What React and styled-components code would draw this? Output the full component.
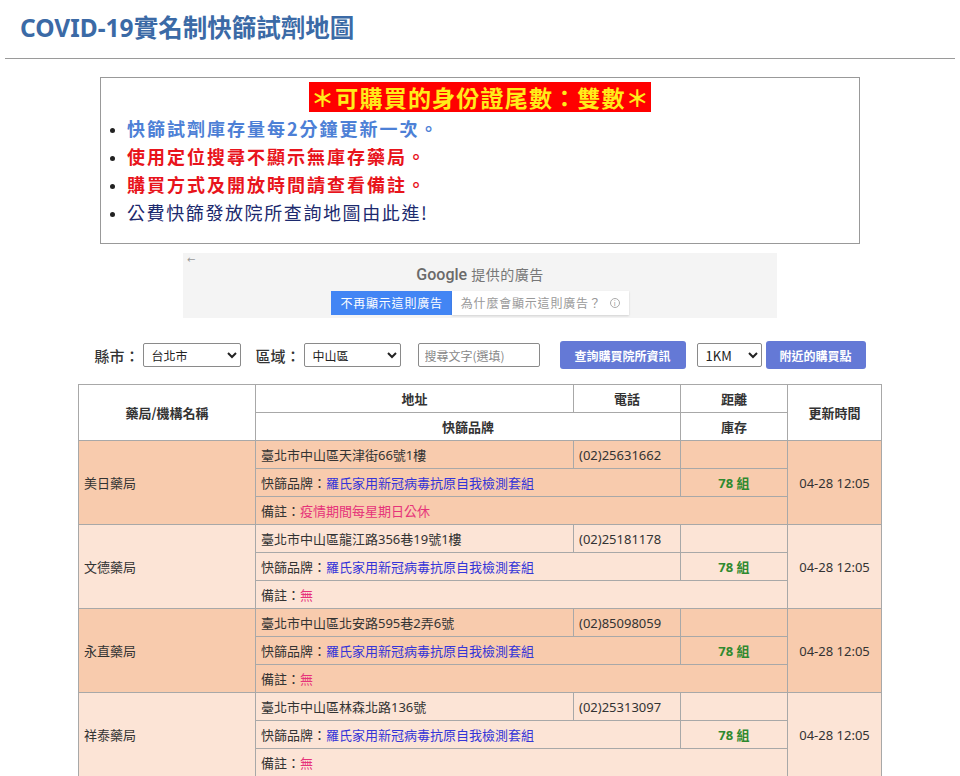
import React from "react";
import styled, { createGlobalStyle } from "styled-components";

const Global = createGlobalStyle`
  html, body { margin: 0; padding: 0; background: #fff; }
  body { font-family: "Noto Sans", "Noto Sans CJK TC", sans-serif; color: #333; }
  * { box-sizing: border-box; }
`;

const Page = styled.div`
  width: 960px;
  display: flex;
  flex-direction: column;
  align-items: center;
`;

const Header = styled.header`
  align-self: stretch;
  padding: 10px 15px 0;
  height: 59px;
  border-bottom: 1px solid #9a9a9a;
  margin: 0 5px;
`;

const Title = styled.h1`
  margin: 0;
  font-size: 24.5px;
  line-height: 36px;
  font-weight: 700;
  color: #3b6aa6;
  font-family: "Noto Sans", "Noto Sans CJK TC", sans-serif;
`;

const Notice = styled.section`
  margin-top: 18px;
  width: 760px;
  height: 167px;
  border: 1px solid #999;
  display: flex;
  flex-direction: column;
  align-items: center;
`;

const Banner = styled.div`
  margin-top: 4px;
  height: 30px;
  line-height: 30px;
  background: #ff0000;
  color: #ffeb1a;
  font-weight: 700;
  font-size: 23px;
  letter-spacing: 1.2px;
  padding: 0 1px 0 2px;
  font-family: "Noto Sans CJK TC", sans-serif;
`;

const Bullets = styled.ul`
  align-self: stretch;
  margin: 2px 0 0;
  padding-left: 26px;
  list-style: disc;
`;

const Bullet = styled.li`
  height: 28px;
  line-height: 28px;
  font-size: 18px;
  letter-spacing: ${(p) => (p.$bold ? 2 : 1.6)}px;
  font-weight: ${(p) => (p.$bold ? 700 : 400)};
  color: ${(p) => p.$color};
  font-family: "Noto Sans CJK TC", sans-serif;
  &::marker { color: #222; font-size: 13px; }
`;

const Ad = styled.div`
  margin-top: 9px;
  width: 594px;
  height: 65px;
  background: #f4f4f4;
  position: relative;
  display: flex;
  flex-direction: column;
  align-items: center;
  padding-top: 11px;
`;

const BackArrow = styled.span`
  position: absolute;
  left: 4px;
  top: 1px;
  font-size: 10px;
  color: #999;
  font-family: "DejaVu Sans", sans-serif;
`;

const AdLabel = styled.div`
  font-size: 14px;
  color: #777;
  line-height: 20px;
  font-family: "Noto Sans CJK TC", sans-serif;
  letter-spacing: 0.5px;
  span { font-family: "Roboto", "Noto Sans", sans-serif; font-size: 16px; font-weight: 500; color: #6a6a6a; letter-spacing: 0; margin-right: 4px; }
`;

const AdButtons = styled.div`
  margin-top: 6px;
  display: flex;
`;

const AdButton = styled.div`
  height: 24px;
  line-height: 24px;
  font-size: 12px;
  padding: 0 9px;
  background: ${(p) => (p.$primary ? "#4285f4" : "#fff")};
  color: ${(p) => (p.$primary ? "#fff" : "#999")};
  box-shadow: ${(p) => (p.$primary ? "none" : "0 1px 2px rgba(0,0,0,0.15)")};
  font-family: "Noto Sans CJK TC", sans-serif;
  letter-spacing: 0.8px;
  display: flex;
  align-items: center;
  gap: 8px;
`;

const InfoIcon = styled.span`
  width: 10px;
  height: 10px;
  border: 1px solid #aaa;
  border-radius: 50%;
  font-size: 7px;
  line-height: 8px;
  text-align: center;
  color: #999;
  letter-spacing: 0;
`;

const Controls = styled.div`
  margin-top: 23px;
  display: flex;
  align-items: center;
  height: 28px;
`;

const Label = styled.span`
  font-size: 15px;
  color: #333;
  margin-right: 3px;
  margin-left: ${(p) => p.$ml || 0}px;
  font-family: "Noto Sans CJK TC", sans-serif;
  font-weight: 500;
`;

const Select = styled.select`
  width: ${(p) => p.$w}px;
  height: 24px;
  font-size: ${(p) => p.$fs || 12}px;
  border: 1px solid #8a8a8a;
  border-radius: 2px;
  background: #fff;
  color: #222;
  padding: 0 4px;
  margin-left: ${(p) => p.$ml || 0}px;
  font-family: "Noto Sans CJK TC", "Noto Sans", sans-serif;
`;

const Input = styled.input`
  width: 122px;
  height: 24px;
  margin-left: 17px;
  border: 1px solid #8a8a8a;
  border-radius: 2px;
  padding: 0 6px;
  font-size: 12px;
  font-family: "Noto Sans CJK TC", sans-serif;
  &::placeholder { color: #888; }
`;

const Button = styled.button`
  width: ${(p) => p.$w}px;
  height: 28px;
  margin-left: ${(p) => p.$ml || 0}px;
  border: none;
  border-radius: 3px;
  background: #6479d6;
  color: #fff;
  font-size: 12px;
  font-weight: 700;
  font-family: "Noto Sans CJK TC", sans-serif;
`;

const Table = styled.table`
  margin-top: 15px;
  width: 803px;
  border-collapse: collapse;
  border: 1px solid #858585;
  table-layout: fixed;
  font-size: 13px;
  font-family: "Noto Sans", "Noto Sans CJK TC", sans-serif;
`;

const Th = styled.th`
  height: 28px;
  border: 1px solid #a8a8a8;
  background: #fff;
  font-weight: 700;
  color: #333;
  padding: 0;
  font-family: "Noto Sans CJK TC", sans-serif;
`;

const Td = styled.td`
  height: 28px;
  border: 1px solid #a8a8a8;
  padding: 0 5px;
  color: #333;
  background: ${(p) => (p.$dark ? "#f8cbad" : "#fce4d6")};
  text-align: ${(p) => p.$align || "left"};
  white-space: nowrap;
`;

const Brand = styled.span`
  color: #3535d8;
`;

const Note = styled.span`
  color: #e6337a;
`;

const Stock = styled.span`
  color: #2f8a2f;
  font-weight: 700;
`;

const rows = [
  { name: "美日藥局", addr: "臺北市中山區天津街66號1樓", phone: "(02)25631662", note: "疫情期間每星期日公休" },
  { name: "文德藥局", addr: "臺北市中山區龍江路356巷19號1樓", phone: "(02)25181178", note: "無" },
  { name: "永直藥局", addr: "臺北市中山區北安路595巷2弄6號", phone: "(02)85098059", note: "無" },
  { name: "祥泰藥局", addr: "臺北市中山區林森北路136號", phone: "(02)25313097", note: "無" },
];

export default function App() {
  return (
    <>
      <Global />
      <Page>
        <Header>
          <Title>COVID-19實名制快篩試劑地圖</Title>
        </Header>
        <Notice>
          <Banner>＊可購買的身份證尾數：雙數＊</Banner>
          <Bullets>
            <Bullet $bold $color="#4d80d6">快篩試劑庫存量每2分鐘更新一次。</Bullet>
            <Bullet $bold $color="#e8141c">使用定位搜尋不顯示無庫存藥局。</Bullet>
            <Bullet $bold $color="#e8141c">購買方式及開放時間請查看備註。</Bullet>
            <Bullet $color="#1c2a6e">公費快篩發放院所查詢地圖由此進!</Bullet>
          </Bullets>
        </Notice>
        <Ad>
          <BackArrow>←</BackArrow>
          <AdLabel><span>Google</span>提供的廣告</AdLabel>
          <AdButtons>
            <AdButton $primary>不再顯示這則廣告</AdButton>
            <AdButton>為什麼會顯示這則廣告？<InfoIcon>i</InfoIcon></AdButton>
          </AdButtons>
        </Ad>
        <Controls>
          <Label>縣市：</Label>
          <Select $w={98} defaultValue="台北市"><option>台北市</option></Select>
          <Label $ml={15}>區域：</Label>
          <Select $w={97} defaultValue="中山區"><option>中山區</option></Select>
          <Input placeholder="搜尋文字(選填)" />
          <Button $w={126} $ml={20}>查詢購買院所資訊</Button>
          <Select $w={65} $ml={11} $fs={13} defaultValue="1KM"><option>1KM</option></Select>
          <Button $w={100} $ml={4}>附近的購買點</Button>
        </Controls>
        <Table>
          <colgroup>
            <col style={{ width: 177 }} />
            <col style={{ width: 318 }} />
            <col style={{ width: 107 }} />
            <col style={{ width: 107 }} />
            <col style={{ width: 94 }} />
          </colgroup>
          <thead>
            <tr>
              <Th rowSpan={2}>藥局/機構名稱</Th>
              <Th>地址</Th>
              <Th>電話</Th>
              <Th>距離</Th>
              <Th rowSpan={2}>更新時間</Th>
            </tr>
            <tr>
              <Th colSpan={2}>快篩品牌</Th>
              <Th>庫存</Th>
            </tr>
          </thead>
          <tbody>
            {rows.map((r, i) => {
              const dark = i % 2 === 0;
              return (
                <React.Fragment key={r.name}>
                  <tr>
                    <Td $dark={dark} rowSpan={3}>{r.name}</Td>
                    <Td $dark={dark}>{r.addr}</Td>
                    <Td $dark={dark}>{r.phone}</Td>
                    <Td $dark={dark}></Td>
                    <Td $dark={dark} rowSpan={3} $align="center">04-28 12:05</Td>
                  </tr>
                  <tr>
                    <Td $dark={dark} colSpan={2}>快篩品牌：<Brand>羅氏家用新冠病毒抗原自我檢測套組</Brand></Td>
                    <Td $dark={dark} $align="center"><Stock>78 組</Stock></Td>
                  </tr>
                  <tr>
                    <Td $dark={dark} colSpan={3}>備註：<Note>{r.note}</Note></Td>
                  </tr>
                </React.Fragment>
              );
            })}
          </tbody>
        </Table>
      </Page>
    </>
  );
}
